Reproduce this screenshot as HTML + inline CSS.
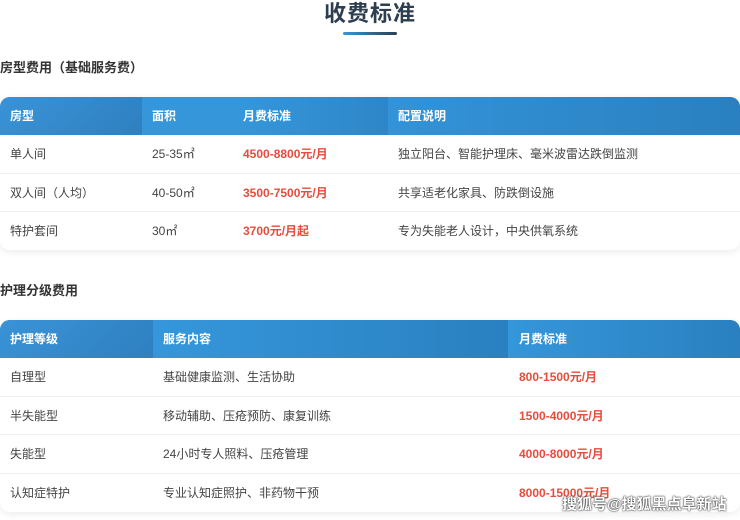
<!DOCTYPE html>
<html><head><meta charset="utf-8"><style>
*{margin:0;padding:0;box-sizing:border-box}
body{width:740px;height:520px;overflow:hidden;background:#fff;font-family:"Liberation Sans","Noto Sans CJK SC",sans-serif;position:relative;color:#444}
.title{position:absolute;top:-4px;left:0;width:740px;text-align:center;font-size:22px;font-weight:bold;color:#2c3e50;letter-spacing:1px}
.bar{position:absolute;left:343px;top:32px;width:54px;height:3px;border-radius:2px;background:linear-gradient(90deg,#3498db,#2c3e50)}
.h{position:absolute;left:0;font-size:13px;font-weight:bold;color:#333}
.tbl{position:absolute;left:0;width:740px;border-radius:10px;overflow:hidden;box-shadow:0 2px 8px rgba(0,0,0,.08);background:#fff}
.row{position:relative;height:38.5px;border-bottom:1px solid #f0f0f0;font-size:12px}
.row span{position:absolute;top:0;line-height:38px}
.hd{background:linear-gradient(90deg,#3a92d6,#2f86c8);color:#fff;font-weight:bold;height:38px;border-bottom:none}
.hd .c{position:absolute;top:0;height:38px}
.red{color:#e74c3c;font-weight:bold}
.wm{position:absolute;left:562px;top:493px;font-size:15px;font-weight:bold;color:#fff;text-shadow:0 0 2px #333,0 0 1px #000}
</style></head><body>
<div class="title">收费标准</div>
<div class="bar"></div>
<div class="h" style="top:57px">房型费用（基础服务费）</div>
<div class="tbl" style="top:97px;height:153px">
 <div class="row hd">
  <div class="c" style="left:0;width:142px;background:linear-gradient(135deg,#3a93d7,#2e80c0)"></div>
  <div class="c" style="left:142px;width:91px;background:#3596da"></div>
  <div class="c" style="left:233px;width:155px;background:linear-gradient(90deg,#3597db,#2e86c8)"></div>
  <div class="c" style="left:388px;width:352px;background:linear-gradient(90deg,#3393d8,#2a80c0)"></div>
  <span style="left:10px">房型</span><span style="left:152px">面积</span><span style="left:243px">月费标准</span><span style="left:398px">配置说明</span>
 </div>
 <div class="row"><span style="left:10px">单人间</span><span style="left:152px">25-35㎡</span><span class="red" style="left:243px">4500-8800元/月</span><span style="left:398px">独立阳台、智能护理床、毫米波雷达跌倒监测</span></div>
 <div class="row"><span style="left:10px">双人间（人均）</span><span style="left:152px">40-50㎡</span><span class="red" style="left:243px">3500-7500元/月</span><span style="left:398px">共享适老化家具、防跌倒设施</span></div>
 <div class="row" style="border:none"><span style="left:10px">特护套间</span><span style="left:152px">30㎡</span><span class="red" style="left:243px">3700元/月起</span><span style="left:398px">专为失能老人设计，中央供氧系统</span></div>
</div>
<div class="h" style="top:280px">护理分级费用</div>
<div class="tbl" style="top:320px;height:192px">
 <div class="row hd">
  <div class="c" style="left:0;width:153px;background:linear-gradient(135deg,#3a93d7,#2e80c0)"></div>
  <div class="c" style="left:153px;width:355px;background:linear-gradient(90deg,#3597db,#2a80c0)"></div>
  <div class="c" style="left:508px;width:232px;background:linear-gradient(90deg,#3596da,#2a80c0)"></div>
  <span style="left:10px">护理等级</span><span style="left:163px">服务内容</span><span style="left:519px">月费标准</span>
 </div>
 <div class="row"><span style="left:10px">自理型</span><span style="left:163px">基础健康监测、生活协助</span><span class="red" style="left:519px">800-1500元/月</span></div>
 <div class="row"><span style="left:10px">半失能型</span><span style="left:163px">移动辅助、压疮预防、康复训练</span><span class="red" style="left:519px">1500-4000元/月</span></div>
 <div class="row"><span style="left:10px">失能型</span><span style="left:163px">24小时专人照料、压疮管理</span><span class="red" style="left:519px">4000-8000元/月</span></div>
 <div class="row" style="border:none"><span style="left:10px">认知症特护</span><span style="left:163px">专业认知症照护、非药物干预</span><span class="red" style="left:519px">8000-15000元/月</span></div>
</div>
<div class="wm">搜狐号@搜狐黑点阜新站</div>
</body></html>
